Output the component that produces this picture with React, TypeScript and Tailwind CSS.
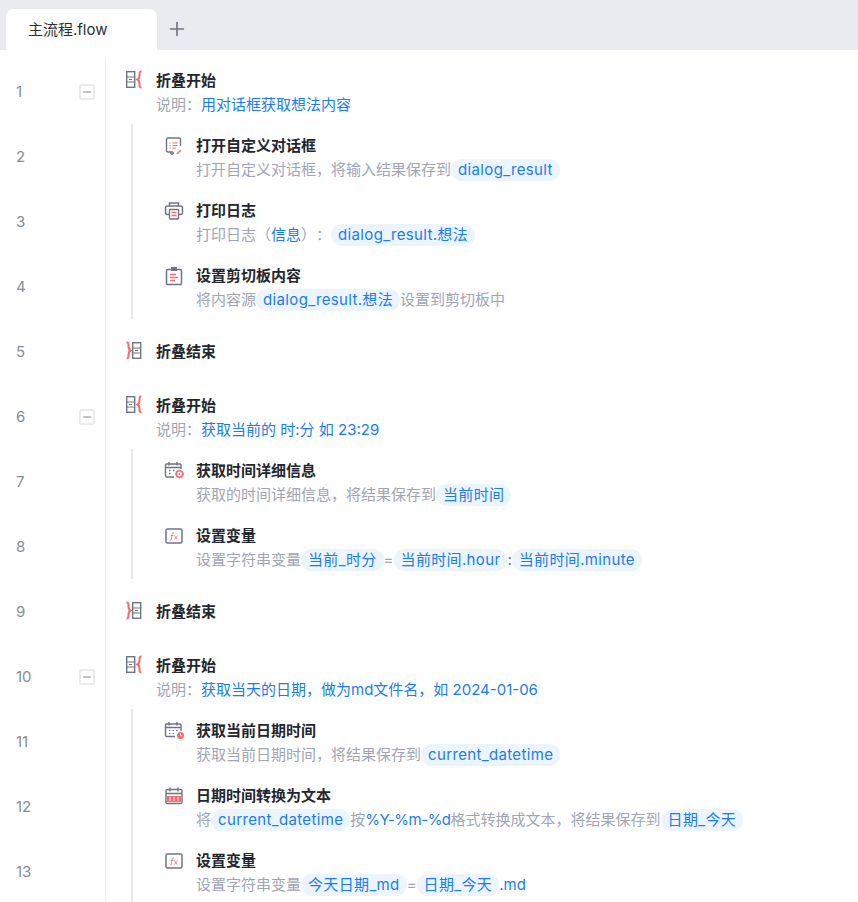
import React from 'react';
import { Plus, Minus } from 'lucide-react';

const FONT = 'font-["Inter","Noto_Sans_CJK_SC",sans-serif]';

const GREY = '#6f7580';
const RED = '#f56c6c';

// ── Ícones dos comandos ──
const FoldStart = () => (
  <svg width="22" height="19" viewBox="0 0 22 19" fill="none" className="-mt-[2px]">
    <rect x="1.7" y="1.7" width="8" height="15.6" stroke={GREY} strokeWidth="1.4" />
    <path d="M1.5 7h8M1.5 12h8M4 9.5h3" stroke={GREY} strokeWidth="1.2" />
    <path d="M16.5 1.5c-2 0-2 1-2 3.5s0 3.5-2 4.5c2 1 2 2 2 4.5s0 3.5 2 3.5" stroke={RED} strokeWidth="2" />
  </svg>
);

const FoldEnd = () => (
  <svg width="22" height="19" viewBox="0 0 22 19" fill="none" className="-mt-[1px]">
    <path d="M1.5 1.5c2 0 2 1 2 3.5s0 3.5 2 4.5c-2 1-2 2-2 4.5s0 3.5-2 3.5" stroke={RED} strokeWidth="2" />
    <rect x="7.7" y="1.7" width="8" height="15.6" stroke={GREY} strokeWidth="1.4" />
    <path d="M7.5 7h8M7.5 12h8M10 9.5h3" stroke={GREY} strokeWidth="1.2" />
  </svg>
);

const DialogIcon = () => (
  <svg width="20" height="20" viewBox="0 0 20 20" fill="none">
    <path d="M9 16H4a1.5 1.5 0 0 1-1.5-1.5v-11A1.5 1.5 0 0 1 4 2h11a1.5 1.5 0 0 1 1.5 1.5V10" stroke={GREY} strokeWidth="1.4" />
    <path d="M6 16.5 8 18.5 10 16.5" stroke={GREY} strokeWidth="1.2" />
    <path d="M5.5 7h1.2M5.5 9.5h1.2M5.5 12h1.2M8.5 7h5M8.5 9.5h5M8.5 12h3.5" stroke={RED} strokeWidth="1.2" />
    <path d="m13 18 4-4" stroke={RED} strokeWidth="1.5" />
  </svg>
);

const PrinterIcon = () => (
  <svg width="20" height="20" viewBox="0 0 20 20" fill="none">
    <path d="M5.5 5V2h9v3" stroke={GREY} strokeWidth="1.5" />
    <path d="M5 13.5H3.5a2 2 0 0 1-2-2V7a2 2 0 0 1 2-2h13a2 2 0 0 1 2 2v4.5a2 2 0 0 1-2 2H15" stroke={GREY} strokeWidth="1.5" />
    <rect x="5.5" y="8.5" width="9" height="9.5" rx="0.8" stroke={GREY} strokeWidth="1.4" />
    <path d="M7.5 11.5h5M7.5 14.5h5" stroke={RED} strokeWidth="1.3" />
  </svg>
);

const ClipboardIcon = () => (
  <svg width="20" height="20" viewBox="0 0 20 20" fill="none">
    <rect x="2.5" y="3.5" width="15" height="15" rx="1.2" stroke={GREY} strokeWidth="1.5" />
    <rect x="7" y="1" width="6" height="4" fill={GREY} />
    <path d="M6 8.5h6M6 11.5h8M6 14.5h5" stroke={RED} strokeWidth="1.3" />
  </svg>
);

const CalendarGear = () => (
  <svg width="22" height="20" viewBox="0 0 22 20" fill="none">
    <path d="M10 16H2.5A1.2 1.2 0 0 1 1.5 15V4A1.2 1.2 0 0 1 2.5 3h13A1.2 1.2 0 0 1 17 4v4" stroke={GREY} strokeWidth="1.4" />
    <path d="M1.5 6.5H17M5 1v3.5M13 1v3.5" stroke={GREY} strokeWidth="1.4" />
    <path d="M5 9.5h1.5M9 9.5h1.5M5 12.5h1.5" stroke={GREY} strokeWidth="1.3" />
    <circle cx="15.5" cy="13" r="3.2" stroke={RED} strokeWidth="1.6" />
    <circle cx="15.5" cy="13" r="0.9" fill={RED} />
    <path d="M15.5 8.5v1.2M15.5 16.4v1.2M11 13h1.2M18.8 13H20" stroke={RED} strokeWidth="1.3" />
  </svg>
);

const CalendarClock = () => (
  <svg width="22" height="20" viewBox="0 0 22 20" fill="none">
    <path d="M11 15.5H2.5A1.2 1.2 0 0 1 1.5 14.5V4A1.2 1.2 0 0 1 2.5 3h13A1.2 1.2 0 0 1 17 4v6" stroke={GREY} strokeWidth="1.4" />
    <path d="M1.5 6.5H17M5 1v3.5M13 1v3.5" stroke={GREY} strokeWidth="1.4" />
    <path d="M5 9.5h1.5M8.5 9.5H10M12 9.5h1.5M5 12.5h1.5M8.5 12.5H10" stroke={GREY} strokeWidth="1.2" />
    <circle cx="16.5" cy="14.5" r="3.5" fill={RED} />
    <path d="M16.5 12.5v2.2h1.5" stroke="#fff" strokeWidth="0.9" />
  </svg>
);

const CalendarText = () => (
  <svg width="20" height="20" viewBox="0 0 20 20" fill="none">
    <rect x="2" y="3.5" width="16" height="14" rx="1.2" stroke={GREY} strokeWidth="1.4" />
    <path d="M2 7.5h16M6 1.5v4M14 1.5v4" stroke={GREY} strokeWidth="1.4" />
    <rect x="3" y="10" width="14" height="6" fill={RED} />
    <path d="M5 12h2M5 14h2M9 12h2M9 14h2M13 12h2M13 14h2" stroke="#fff" strokeWidth="0.9" />
  </svg>
);

const FxIcon = () => (
  <svg width="20" height="20" viewBox="0 0 20 20" fill="none">
    <rect x="2" y="3" width="16" height="14" rx="1.5" stroke={GREY} strokeWidth="1.5" />
    <path d="M10 7c-1.2-.4-1.6.2-1.8 1.4L7.4 13c-.2 1-.7 1.2-1.4 1M6.8 9.5h2.6" stroke={RED} strokeWidth="0.8" />
    <path d="m10.5 9.5 2.6 4M13.5 9.5l-3 4" stroke={RED} strokeWidth="0.8" />
  </svg>
);

// ── Partes de uma linha ──
const Chip = ({ children }: { children: React.ReactNode }) => (
  <span className="inline-block h-[22px] rounded-full bg-[#ecf4fe] px-[7px] text-[15px] leading-[22px] tracking-[0.35px] text-[#1a7cf0]">{children}</span>
);

const Blue = ({ children }: { children: React.ReactNode }) => <span className="text-[#1a7cf0]">{children}</span>;

const Gutter = ({ n, fold }: { n: number; fold?: boolean }) => (
  <div className="flex w-[106px] shrink-0 items-center border-r border-[#eeeff2] pt-[2px] pl-4 pr-[10px] text-[15px] text-[#878d98]">
    <span className="flex-1">{n}</span>
    {fold && (
      <span className="flex h-4 w-4 items-center justify-center rounded-[2px] border-2 border-[#ebebeb] bg-white text-[#555b66]">
        <Minus size={12} strokeWidth={1.5} />
      </span>
    )}
  </div>
);

const Row = ({ n, fold, nested, icon, title, children }: {
  n: number; fold?: boolean; nested?: boolean; icon: React.ReactNode; title: string; children?: React.ReactNode;
}) => (
  <div className="flex h-[65px]">
    <Gutter n={n} fold={fold} />
    <div className={nested ? 'ml-[25px] flex flex-1 border-l-2 border-[#e8e8e8] pl-[31px]' : 'ml-[19px] flex flex-1'}>
      <div className={`flex shrink-0 flex-col justify-center ${nested ? 'w-[32px]' : 'w-[31px]'} ${children ? 'pt-[4px]' : ''}`}>
        <div className="flex h-[25px] items-center">{icon}</div>
        {children && <div className="h-[25px]" />}
      </div>
      <div className={`flex flex-col justify-center whitespace-nowrap ${children ? 'pt-[2px]' : ''}`}>
        <div className={`h-[25px] text-[15px] font-bold text-[#23262e] ${children ? 'leading-[28px]' : 'leading-[26px]'}`}>{title}</div>
        {children && <div className="flex h-[25px] items-center pt-[1px] text-[15px] text-[#a0a5b4]">{children}</div>}
      </div>
    </div>
  </div>
);

export default function App() {
  return (
    <div className={`${FONT} h-[902px] w-[858px] overflow-hidden bg-white [text-spacing-trim:space-all]`}>
      <div className="flex h-[50px] bg-[#e9ebf0] pt-[9px] pl-[6px]">
        <div className="flex h-[41px] w-[151px] items-center rounded-t-lg bg-white pt-[2px] pl-[22px] text-[15px] text-[#2b2f36]">主流程.flow</div>
        <div className="flex h-[41px] flex-1 rounded-bl-lg">
          <Plus size={22} strokeWidth={1.8} className="mt-[9px] ml-[9px] text-[#6f7580]" />
        </div>
      </div>
      <div className="pt-[8.5px]">
        <Row n={1} fold icon={<FoldStart />} title="折叠开始">
          说明：<Blue>用对话框获取想法内容</Blue>
        </Row>
        <Row n={2} nested icon={<DialogIcon />} title="打开自定义对话框">
          打开自定义对话框，将输入结果保存到<Chip>dialog_result</Chip>
        </Row>
        <Row n={3} nested icon={<PrinterIcon />} title="打印日志">
          打印日志（<Blue>信息</Blue>）：<Chip>dialog_result.想法</Chip>
        </Row>
        <Row n={4} nested icon={<ClipboardIcon />} title="设置剪切板内容">
          将内容源<Chip>dialog_result.想法</Chip>设置到剪切板中
        </Row>
        <Row n={5} icon={<FoldEnd />} title="折叠结束" />
        <Row n={6} fold icon={<FoldStart />} title="折叠开始">
          说明：<Blue>获取当前的 时:分 如 23:29</Blue>
        </Row>
        <Row n={7} nested icon={<CalendarGear />} title="获取时间详细信息">
          获取的时间详细信息，将结果保存到<Chip>当前时间</Chip>
        </Row>
        <Row n={8} nested icon={<FxIcon />} title="设置变量">
          设置字符串变量<Chip>当前_时分</Chip>=<Chip>当前时间.hour</Chip><Blue>:</Blue><Chip>当前时间.minute</Chip>
        </Row>
        <Row n={9} icon={<FoldEnd />} title="折叠结束" />
        <Row n={10} fold icon={<FoldStart />} title="折叠开始">
          说明：<Blue>获取当天的日期，做为md文件名，如 2024-01-06</Blue>
        </Row>
        <Row n={11} nested icon={<CalendarClock />} title="获取当前日期时间">
          获取当前日期时间，将结果保存到<Chip>current_datetime</Chip>
        </Row>
        <Row n={12} nested icon={<CalendarText />} title="日期时间转换为文本">
          将<Chip>current_datetime</Chip>按<span className="tracking-[-0.5px] text-[#1a7cf0]">%Y-%m-%d</span>格式转换成文本，将结果保存到<Chip>日期_今天</Chip>
        </Row>
        <Row n={13} nested icon={<FxIcon />} title="设置变量">
          设置字符串变量<Chip>今天日期_md</Chip>=<Chip>日期_今天</Chip><Blue>.md</Blue>
        </Row>
      </div>
    </div>
  );
}
